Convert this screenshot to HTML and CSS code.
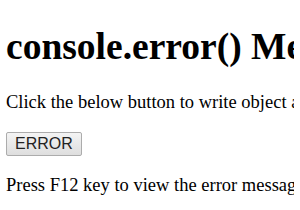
FILE: index.html
```html
<!DOCTYPE html>
<html lang="en">
<head>
  <meta charset="UTF-8">
  <title>console.error() Method</title>
  <link rel="stylesheet" href="styles.css">
</head>
<body>
  <h1>console.error() Method</h1>
  <p>Click the below button to write object as error message on the console</p>
  <button onclick="showError()">ERROR</button>
  <p>Press F12 key to view the error message in the console.</p>

  <script>
    function showError () {
      console.error({ name: 'error', message: 'Something went wrong' })
    }
  </script>
</body>
</html>
```

FILE: styles.css
```css
html, body {
  overflow: hidden;
}

body {
  margin: 6px;
  font-family: "Liberation Serif", "Times New Roman", serif;
  font-size: 18.5px;
  white-space: nowrap;
  color: #000;
  background: #fff;
}

h1 {
  font-size: 37.5px;
  margin: 19px 0 24px;
}

p {
  margin: 19px 0;
}

button {
  font-family: "Liberation Sans", Arial, sans-serif;
  font-size: 16px;
  padding: 2px 8px;
  color: #222;
  border: 1px solid #acacac;
  border-radius: 2px;
  background: linear-gradient(#f4f4f4, #dedede);
}
```
